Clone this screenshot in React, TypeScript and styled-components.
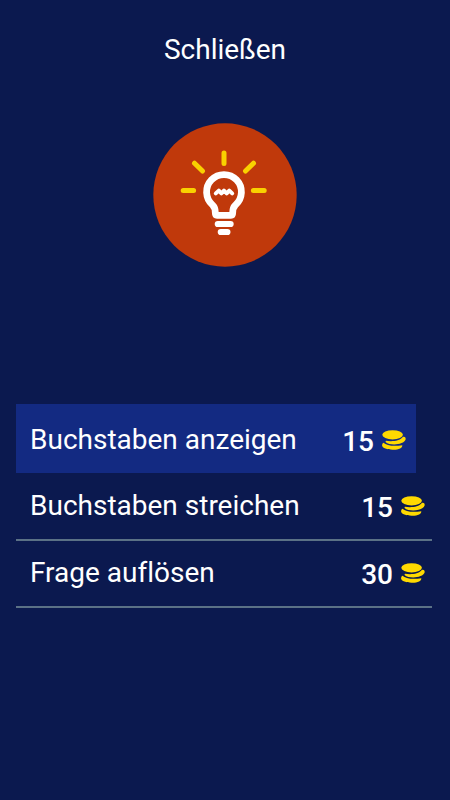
import React from "react";
import styled, { createGlobalStyle } from "styled-components";

const GlobalStyle = createGlobalStyle`
  * { box-sizing: border-box; }
  body {
    margin: 0;
    background: #0b194f;
    color: #fff;
    font-family: Roboto, sans-serif;
    font-variant-ligatures: none;
  }
  button {
    border: 0;
    background: none;
    color: inherit;
    font: inherit;
    cursor: pointer;
  }
`;

const Page = styled.main`
  display: flex;
  flex-direction: column;
  align-items: center;
  min-height: 100vh;
  padding: 32px 16px;
`;

const CloseButton = styled.button`
  padding: 0;
  font-size: 28px;
  line-height: 36px;
`;

const BulbIcon = styled.svg`
  display: block;
  width: 144px;
  height: 144px;
  margin-top: 55px;
`;

const HintList = styled.ul`
  align-self: stretch;
  margin: 137px 2px 0 0;
  padding: 0;
  list-style: none;
`;

const HintButton = styled.button<{ $active?: boolean }>`
  display: flex;
  align-items: center;
  justify-content: space-between;
  width: ${(p) => (p.$active ? "calc(100% - 16px)" : "100%")};
  height: ${(p) => (p.$active ? 69 : 67)}px;
  margin-bottom: ${(p) => (p.$active ? 1 : 0)}px;
  padding: ${(p) => (p.$active ? "2px 10px 0 14px" : "0 7px 2px 14px")};
  background: ${(p) => (p.$active ? "#132a82" : "transparent")};
  border-bottom: ${(p) => (p.$active ? "0" : "2px solid #5b7186")};
  font-size: 28px;
  line-height: 36px;
  text-align: left;
`;

const Price = styled.span`
  display: flex;
  align-items: center;
  gap: 8px;
  padding-top: 4px;
  font-weight: 500;
`;

const CoinIcon = styled.svg`
  display: block;
  width: 24px;
  height: 20px;
  margin-bottom: 4px;
`;

function Bulb() {
  return (
    <BulbIcon viewBox="0 0 144 144" fill="none" strokeLinecap="round" strokeLinejoin="round" aria-hidden="true">
      <circle cx="72" cy="72" r="71.7" fill="#c0390b" />
      <path
        d="M71 30V40.5M30.2 67.5H40.6M100.4 67.5H111.2M41.5 40.2L49.5 48M100.5 40.2L92.5 48"
        stroke="#f9d100"
        strokeWidth="5"
      />
      <g stroke="#fff">
        <path
          d="M59.5 82A17.4 17.4 0 1 1 82.5 82C80.2 84.2 79.7 86.5 79.7 89.5Q79.7 92.3 78 92.3H64Q62.3 92.3 62.3 89.5C62.3 86.5 61.8 84.2 59.5 82Z"
          strokeWidth="6.8"
        />
        <path d="M64.8 101H77.6M67.8 109H74.4" strokeWidth="6.2" />
        <path d="M62.8 70.4L65.8 67.6L68.4 70.4L71 67.6L73.7 70.4L76.3 67.6L79.2 70.4" strokeWidth="4" />
      </g>
    </BulbIcon>
  );
}

function Coins() {
  return (
    <CoinIcon viewBox="0 0 24 20" fill="#ffd900" aria-hidden="true">
      <ellipse cx="10.6" cy="4.8" rx="10.3" ry="4.6" />
      <path d="M4 10.7C9 11.7 17.5 11.3 20.8 7C22.8 6.4 24 7.6 23.6 9.6C22.3 14.9 8 16 3.8 12.2Q3.2 11 4 10.7Z" />
      <path d="M1.5 12.8C4.5 15.8 12 16.6 20.3 15.2C20.6 19 14 19.8 10.5 19.8C5 19.8 -1.5 18 .4 14Q.9 12.8 1.5 12.8Z" />
    </CoinIcon>
  );
}

const hints = [
  { label: "Buchstaben anzeigen", price: 15, active: true },
  { label: "Buchstaben streichen", price: 15 },
  { label: "Frage auflösen", price: 30 },
];

export default function App() {
  return (
    <>
      <GlobalStyle />
      <Page>
        <CloseButton type="button">Schließen</CloseButton>
        <Bulb />
        <HintList>
          {hints.map((hint) => (
            <li key={hint.label}>
              <HintButton type="button" $active={hint.active}>
                <span>{hint.label}</span>
                <Price>
                  {hint.price}
                  <Coins />
                </Price>
              </HintButton>
            </li>
          ))}
        </HintList>
      </Page>
    </>
  );
}
